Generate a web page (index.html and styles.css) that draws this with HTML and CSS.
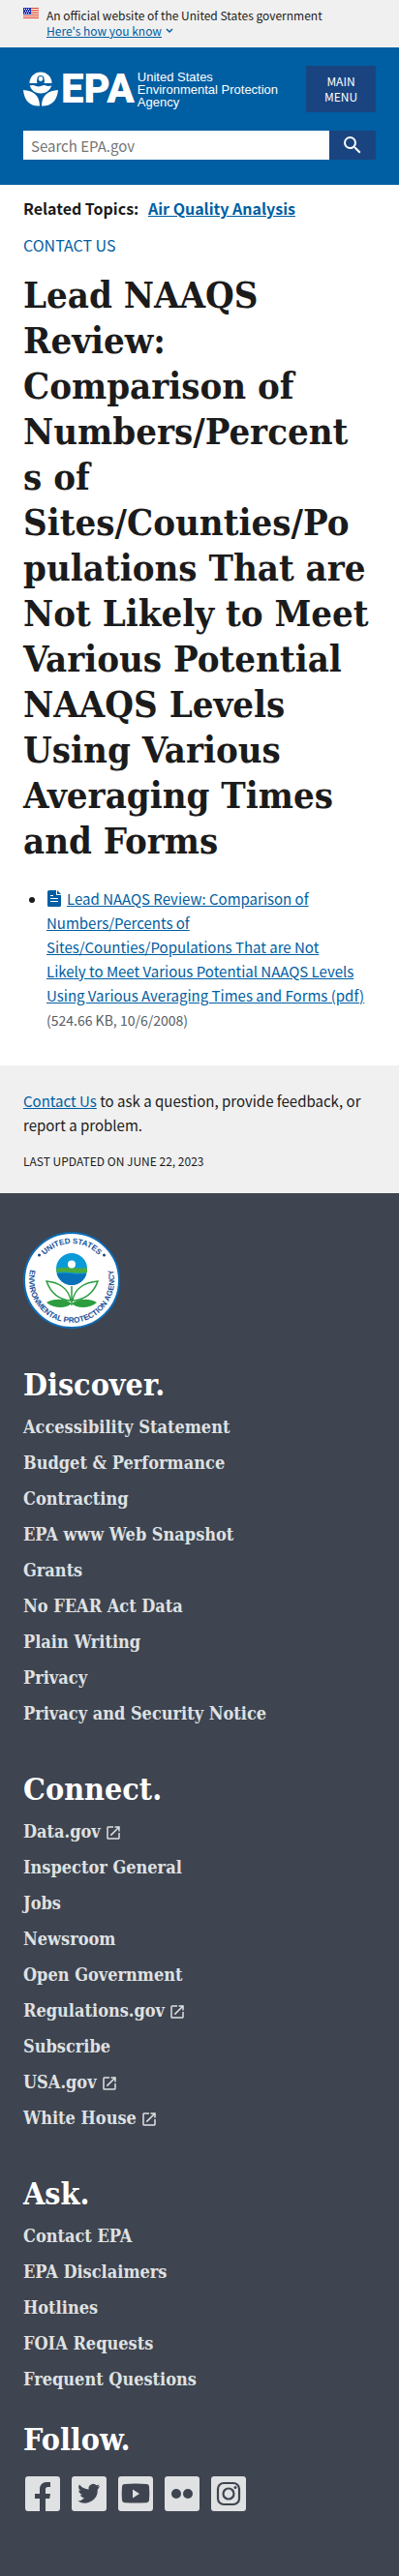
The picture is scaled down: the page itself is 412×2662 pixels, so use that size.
FILE: index.html
```html
<!DOCTYPE html>
<html lang="en">
<head>
<meta charset="utf-8">
<meta name="viewport" content="width=device-width, initial-scale=1">
<title>Lead NAAQS Review | US EPA</title>
<link rel="stylesheet" href="styles.css">
</head>
<body>
<svg class="sprite" aria-hidden="true">
  <symbol id="external" viewBox="0 0 24 24"><path d="M19 19H5V5h7V3H5a2 2 0 0 0-2 2v14a2 2 0 0 0 2 2h14c1.100 0 2-.9 2-2v-7h-2v7zM14 3v2h3.590l-9.830 9.830 1.410 1.410L19 6.410V10h2V3h-7z"/></symbol>
</svg>

<section class="banner" aria-label="Official government website">
  <svg class="flag" viewBox="0 0 16 11" aria-hidden="true">
    <path fill="#fff" d="M0 0h16v11H0z"/>
    <path fill="#db3e1f" d="M0 0h16v1H0zM0 2h16v1H0zM0 4h16v1H0zM0 6h16v1H0zM0 8h16v1H0zM0 10h16v1H0z"/>
    <path fill="#1e33b1" d="M0 0h8v7H0z"/>
    <path fill="#fff" d="M1 1h1v1H1zM3 1h1v1H3zM5 1h1v1H5zM2 3h1v1H2zM4 3h1v1H4zM6 3h1v1H6zM1 5h1v1H1zM3 5h1v1H3zM5 5h1v1H5z"/>
  </svg>
  <div>
    <p class="banner-text">An official website of the United States government</p>
    <button class="banner-button" type="button"><span>Here's how you know</span><svg viewBox="0 0 8 6" aria-hidden="true"><path d="M1 1l3 3 3-3" fill="none" stroke="currentColor" stroke-width="1.500"/></svg></button>
  </div>
</section>

<header class="header">
  <div class="header-top">
    <a class="logo" href="#" aria-label="EPA home">
      <svg class="flower" viewBox="0 0 36 36" aria-hidden="true">
        <path fill="#fff" d="M6.500 12A11.500 11.500 0 0 1 29.500 12L21.500 12a4 4 0 1 0-7 0z"/>
        <circle cx="18" cy="7.500" r="3" fill="#fff" stroke="#005ea2" stroke-width="1.200"/>
        <path fill="#fff" d="M6.700 14.500q3-1.300 6 .2t6 .1 5-.4 5.600.2A11.500 11.500 0 0 1 18 22.500 11.500 11.500 0 0 1 6.700 14.500z"/>
        <path fill="#fff" d="M0 19c10 .5 17 5.500 17 16.500C7 36 1 30 0 19zM36 19c-10 .5-17 5.500-17 16.500C29 36 35 30 36 19z"/>
      </svg>
      <span class="logo-name">EPA</span>
      <span class="logo-text">United States<br>Environmental Protection<br>Agency</span>
    </a>
    <button class="menu-button" type="button">MAIN MENU</button>
  </div>
  <form class="search" role="search">
    <input type="search" aria-label="Search EPA.gov" placeholder="Search EPA.gov">
    <button type="button" aria-label="Search"><svg viewBox="0 0 24 24" aria-hidden="true"><path fill="#fff" d="M15.500 14h-.79l-.28-.27A6.470 6.470 0 0 0 16 9.500 6.500 6.500 0 1 0 9.500 16c1.610 0 3.090-.59 4.230-1.570l.27.28v.79l5 4.990L20.490 19l-4.990-5zm-6 0C7.010 14 5 11.990 5 9.500S7.010 5 9.500 5 14 7.010 14 9.500 11.990 14 9.500 14z"/></svg></button>
  </form>
</header>

<main class="main">
  <p class="topics">Related Topics: <a href="#">Air Quality Analysis</a></p>
  <p class="contact"><a href="#">CONTACT US</a></p>
  <h1>Lead NAAQS<br>Review:<br>Comparison of<br>Numbers/Percent<br>s of<br>Sites/Counties/Po<br>pulations That are<br>Not Likely to Meet<br>Various Potential<br>NAAQS Levels<br>Using Various<br>Averaging Times<br>and Forms</h1>
  <ul class="files">
    <li><a href="#"><svg viewBox="0 0 14 17" aria-hidden="true"><path fill="#005ea2" d="M2 0h7v5h5v10.500q0 1.500-1.500 1.500h-11Q0 17 0 15.500v-14Q0 0 2 0zM10 0l4 4h-4z"/><path stroke="#fff" d="M3 8.500h8M3 11.500h8M3 5.500h3"/></svg>Lead NAAQS Review: Comparison of<br>Numbers/Percents of<br>Sites/Counties/Populations That are Not<br>Likely to Meet Various Potential NAAQS Levels<br>Using Various Averaging Times and Forms (pdf)</a><br><span class="file-info">(524.66 KB, 10/6/2008)</span></li>
  </ul>
</main>

<section class="page-info">
  <p><a href="#">Contact Us</a> to ask a question, provide feedback, or report a problem.</p>
  <p class="updated">LAST UPDATED ON JUNE 22, 2023</p>
</section>

<footer class="footer">
  <svg class="seal" viewBox="0 0 100 100" role="img" aria-label="United States Environmental Protection Agency">
    <defs>
      <path id="arc-top" d="M12 50a38 38 0 0 1 76 0"/>
      <path id="arc-bottom" d="M21.300 16.500A44 44 0 1 0 78.700 16.500"/>
    </defs>
    <circle cx="50" cy="50" r="49" fill="#fff" stroke="#0e6cb6" stroke-width="2"/>
    <text class="seal-text"><textPath href="#arc-top" startOffset="50%">UNITED STATES</textPath></text>
    <text class="seal-text"><textPath href="#arc-bottom" startOffset="50%">ENVIRONMENTAL PROTECTION AGENCY</textPath></text>
    <circle cx="16.500" cy="24" r="1.500" fill="#1a4480"/><circle cx="83.500" cy="24" r="1.500" fill="#1a4480"/>
    <circle cx="50" cy="38" r="16" fill="#0b9ad8"/>
    <path fill="#4bab3c" d="M34 38q8-2 16-1t16 0v5q-8 1-16 0t-15.500 0z"/>
    <path fill="#0872b9" d="M34.500 43q8-1 15.500 0t15.500 0a16 16 0 0 1-31 0z"/>
    <circle cx="50" cy="33.500" r="4" fill="#fff"/>
    <g fill="none" stroke="#2c9c3f" stroke-width="1.500"><path d="M50 56v20M49 71C47 58 36 52 24 51c4 11 11 19 25 20zM51 71c2-13 13-19 26-20-4 11-12 19-26 20z"/></g>
    <path fill="#2c9c3f" d="M24 73c8-5 20-4 26 1-6 6-19 5-26-1zM76 73c-8-5-20-4-26 1 6 6 19 5 26-1z"/>
  </svg>

  <nav class="footer-group" aria-labelledby="discover">
    <h2 id="discover">Discover.</h2>
    <ul>
      <li><a href="#">Accessibility Statement</a></li>
      <li><a href="#">Budget &amp; Performance</a></li>
      <li><a href="#">Contracting</a></li>
      <li><a href="#">EPA www Web Snapshot</a></li>
      <li><a href="#">Grants</a></li>
      <li><a href="#">No FEAR Act Data</a></li>
      <li><a href="#">Plain Writing</a></li>
      <li><a href="#">Privacy</a></li>
      <li><a href="#">Privacy and Security Notice</a></li>
    </ul>
  </nav>
  <nav class="footer-group" aria-labelledby="connect">
    <h2 id="connect">Connect.</h2>
    <ul>
      <li><a href="#">Data.gov<svg><use href="#external"/></svg></a></li>
      <li><a href="#">Inspector General</a></li>
      <li><a href="#">Jobs</a></li>
      <li><a href="#">Newsroom</a></li>
      <li><a href="#">Open Government</a></li>
      <li><a href="#">Regulations.gov<svg><use href="#external"/></svg></a></li>
      <li><a href="#">Subscribe</a></li>
      <li><a href="#">USA.gov<svg><use href="#external"/></svg></a></li>
      <li><a href="#">White House<svg><use href="#external"/></svg></a></li>
    </ul>
  </nav>
  <nav class="footer-group footer-group-last" aria-labelledby="ask">
    <h2 id="ask">Ask.</h2>
    <ul>
      <li><a href="#">Contact EPA</a></li>
      <li><a href="#">EPA Disclaimers</a></li>
      <li><a href="#">Hotlines</a></li>
      <li><a href="#">FOIA Requests</a></li>
      <li><a href="#">Frequent Questions</a></li>
    </ul>
  </nav>
  <section>
    <h2>Follow.</h2>
    <div class="social">
      <a href="#" aria-label="Facebook"><svg viewBox="0 0 36 36"><rect width="36" height="36" rx="3"/><path class="cut" d="M15 36V23h-5v-5h5v-4.500C15 8.500 18 6 22.500 6H26v5h-2.500C21.500 11 21 12 21 13.500V18h5l-.8 5H21v13z"/></svg></a>
      <a href="#" aria-label="Twitter"><svg viewBox="0 0 36 36"><rect width="36" height="36" rx="3"/><path class="cut" d="M29 10a9 9 0 0 1-2.500.7 4.500 4.500 0 0 0 2-2.500 9 9 0 0 1-2.900 1.100 4.700 4.700 0 0 0-8 4.200A13 13 0 0 1 8 8.600a4.700 4.700 0 0 0 1.400 6.300 4.500 4.500 0 0 1-2.100-.6c0 2.300 1.500 4.200 3.700 4.700a5 5 0 0 1-2.100.1 4.600 4.600 0 0 0 4.300 3.200A9.400 9.400 0 0 1 6.400 25.500 13.300 13.300 0 0 0 26.800 13.700C27.700 12.200 28.600 11.300 29 10z"/></svg></a>
      <a href="#" aria-label="YouTube"><svg viewBox="0 0 36 36"><rect width="36" height="36" rx="3"/><path class="cut" d="M7 8q11-1 22 0 3 .2 3 3 .6 7 0 13 0 3-3 3.200-11 .8-22 0-3-.2-3-3.200-.6-6 0-13 0-2.800 3-3z"/><path d="M15 13.500v9l7-4.500z"/></svg></a>
      <a href="#" aria-label="Flickr"><svg viewBox="0 0 36 36"><rect width="36" height="36" rx="3"/><g class="cut"><circle cx="12" cy="18" r="5"/><circle cx="24" cy="18" r="5"/></g></svg></a>
      <a href="#" aria-label="Instagram"><svg viewBox="0 0 36 36"><rect width="36" height="36" rx="3"/><g fill="none" stroke="#3e4450" stroke-width="2.200"><rect x="7" y="7" width="22" height="22" rx="6"/><circle cx="18" cy="18" r="5.500"/></g><circle class="cut" cx="25" cy="11.500" r="1.500"/></svg></a>
    </div>
  </section>
</footer>
</body>
</html>
```
FILE: styles.css
```css
* { box-sizing: border-box; }

body {
  margin: 0;
  background: #fff;
  color: #1b1b1b;
  font: 15px/25px "Noto Sans CJK SC", "Noto Sans", sans-serif;
}

h1, h2, p, ul { margin: 0; }
button, input { font-family: inherit; }
a { color: #005ea2; }
.sprite { display: none; }

.banner {
  display: flex;
  gap: 8px;
  padding: 8px 24px 9px;
  background: #f0f0f0;
  font-size: 12px;
  line-height: 16px;
}
.flag { width: 16px; height: 11px; }
.banner-button {
  display: flex;
  align-items: center;
  gap: 4px;
  padding: 0;
  border: 0;
  background: none;
  color: #005ea2;
  font-size: 12px;
  line-height: 16px;
}
.banner-button span { text-decoration: underline; }
.banner-button svg { width: 8px; height: 6px; }

.header {
  padding: 19px 24px 26px;
  background: #005ea2;
}
.header-top {
  display: flex;
  align-items: center;
  justify-content: space-between;
  margin-bottom: 19px;
}
.logo {
  display: flex;
  align-items: center;
  gap: 3px;
  color: #fff;
  text-decoration: none;
  font-family: "Liberation Sans", sans-serif;
}
.flower { width: 36px; height: 36px; }
.logo-name {
  font-family: "Liberation Sans Narrow", "Roboto", sans-serif;
  font-weight: 900;
  font-size: 42px;
  line-height: 36px;
}
.logo-text { font-size: 13px; line-height: 13px; white-space: nowrap; }
.menu-button {
  width: 72px;
  padding: 8px 16px;
  border: 0;
  background: #1a4480;
  color: #fff;
  font-size: 12px;
  line-height: 16px;
}
.search { display: flex; }
.search input {
  flex: 1;
  min-width: 0;
  height: 30px;
  padding: 0 8px;
  border: 0;
  border-radius: 0;
  background: #fff;
  color: #1b1b1b;
  font-size: 15px;
}
.search input::placeholder { color: #757575; }
.search button {
  display: flex;
  align-items: center;
  justify-content: center;
  width: 48px;
  padding: 0;
  border: 0;
  background: #1a4480;
}
.search svg { width: 24px; height: 24px; }

.main { padding: 12px 24px 34px; }
.topics { font-size: 16px; font-weight: 700; }
.topics a { margin-left: 6px; }
.contact { margin-top: 13px; font-size: 16px; }
.contact a { text-decoration: none; }
h1, h2, .footer-group a { font-family: "DejaVu Serif Condensed", "DejaVu Serif", serif; }
h1 {
  margin-top: 15px;
  font-size: 38px;
  line-height: 47px;
  white-space: nowrap;
}
.files { margin-top: 24px; padding-left: 24px; }
.files svg { width: 14px; height: 17px; margin: 0 6px 0 1px; vertical-align: -2px; }
.file-info { color: #565c65; font-size: 14px; }

.page-info { padding: 24px 24px 21px; background: #f0f0f0; }
.updated { margin-top: 12px; font-size: 12px; }

.footer {
  padding: 40px 24px 67px;
  background: #3e4450;
}
.seal { display: block; width: 100px; height: 100px; margin-bottom: 38px; }
.seal-text {
  fill: #1a5096;
  font: 700 8px "Liberation Sans", sans-serif;
  text-anchor: middle;
}
.footer h2 {
  color: #fff;
  font-size: 32px;
  line-height: 40px;
}
.footer-group { padding-bottom: 40px; }
.footer-group-last { padding-bottom: 24px; }
.footer-group ul { padding: 5px 0 0; list-style: none; }
.footer-group li { height: 37px; padding: 6px 0; }
.footer-group a {
  color: #dfe1e2;
  font-size: 18px;
  font-weight: 700;
  text-decoration: none;
}
.footer-group a svg {
  width: 18px;
  height: 18px;
  margin-left: 4px;
  fill: currentColor;
  vertical-align: -4px;
}
.social { display: flex; gap: 12px; padding: 18px 2px 0; }
.social svg { display: block; width: 36px; height: 36px; fill: #dfe1e2; }
.social .cut { fill: #3e4450; }
```
